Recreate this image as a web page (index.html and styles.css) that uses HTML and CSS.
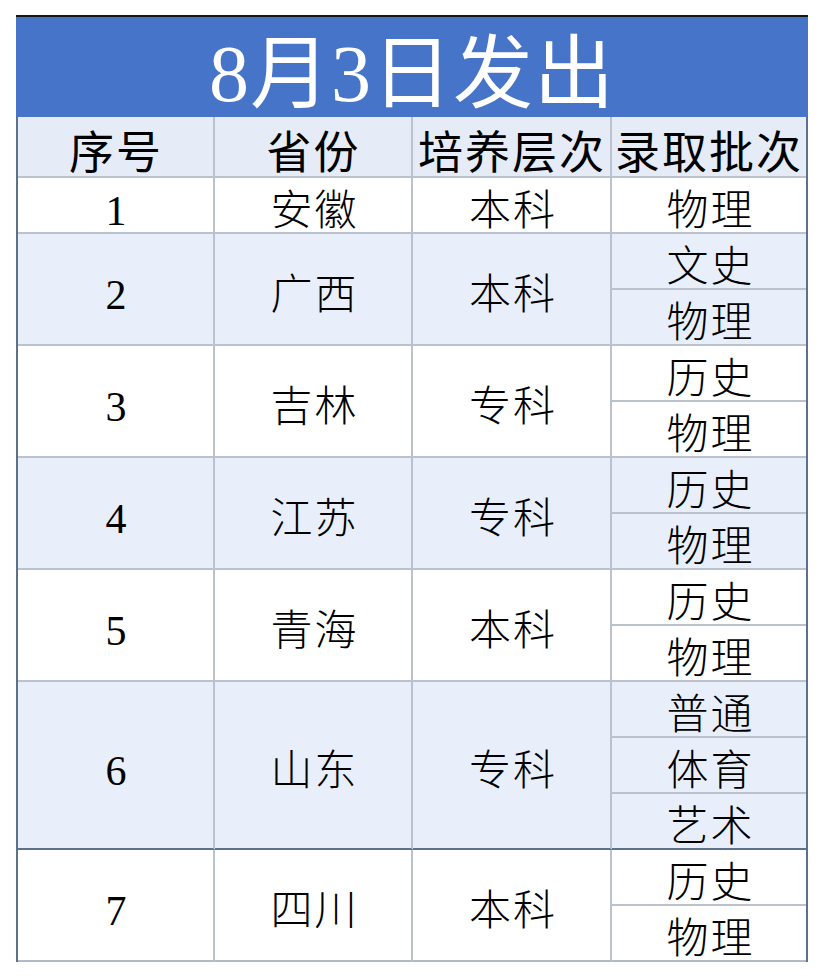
FILE: index.html
```html
<!DOCTYPE html>
<html lang="zh-CN">
<head>
<meta charset="utf-8">
<title>8月3日发出</title>
<link rel="stylesheet" href="styles.css">
</head>
<body>
<div class="sheet">
  <div class="title">8月3日发出</div>
  <div class="grid">
    <div class="cell head">序号</div>
    <div class="cell head">省份</div>
    <div class="cell head">培养层次</div>
    <div class="cell head last-col">录取批次</div>

    <div class="cell">1</div>
    <div class="cell">安徽</div>
    <div class="cell">本科</div>
    <div class="cell last-col">物理</div>

    <div class="cell alt span2">2</div>
    <div class="cell alt span2">广西</div>
    <div class="cell alt span2">本科</div>
    <div class="cell alt last-col">文史</div>
    <div class="cell alt last-col">物理</div>

    <div class="cell span2">3</div>
    <div class="cell span2">吉林</div>
    <div class="cell span2">专科</div>
    <div class="cell last-col">历史</div>
    <div class="cell last-col">物理</div>

    <div class="cell alt span2">4</div>
    <div class="cell alt span2">江苏</div>
    <div class="cell alt span2">专科</div>
    <div class="cell alt last-col">历史</div>
    <div class="cell alt last-col">物理</div>

    <div class="cell span2">5</div>
    <div class="cell span2">青海</div>
    <div class="cell span2">本科</div>
    <div class="cell last-col">历史</div>
    <div class="cell last-col">物理</div>

    <div class="cell alt span3 dark">6</div>
    <div class="cell alt span3 dark">山东</div>
    <div class="cell alt span3 dark">专科</div>
    <div class="cell alt last-col">普通</div>
    <div class="cell alt last-col">体育</div>
    <div class="cell alt last-col dark">艺术</div>

    <div class="cell span2 end">7</div>
    <div class="cell span2 end">四川</div>
    <div class="cell span2 end">本科</div>
    <div class="cell last-col">历史</div>
    <div class="cell last-col end">物理</div>
  </div>
</div>
</body>
</html>
```

FILE: styles.css
```css
html, body {
  margin: 0;
  padding: 0;
  background: #ffffff;
}

body {
  font-family: "Liberation Serif", "Noto Sans CJK SC", serif;
  color: #000000;
}

.sheet {
  margin: 15px 0 0 16px;
  width: 792px;
  border-top: 2px solid #151515;
}

.title {
  box-sizing: border-box;
  height: 100px;
  padding-top: 14px;
  background: #4674c8;
  color: #ffffff;
  font-size: 80px;
  line-height: 1;
  letter-spacing: 1px;
  display: flex;
  align-items: center;
  justify-content: center;
}

.grid {
  box-sizing: border-box;
  width: 792px;
  display: grid;
  grid-template-columns: 197px 198px 199px 1fr;
  grid-template-rows: 61px repeat(14, 56px);
  border-left: 2px solid #5d718c;
  border-right: 2px solid #5d718c;
}

.cell {
  box-sizing: border-box;
  display: flex;
  align-items: center;
  justify-content: center;
  padding-top: 11px;
  padding-left: 3px;
  border-right: 2px solid #bac2ce;
  border-bottom: 2px solid #bac2ce;
  font-size: 42px;
  line-height: 1;
  letter-spacing: 2px;
  font-weight: 300;
  white-space: nowrap;
  background: #ffffff;
}

.head {
  background: #e5ecf8;
  font-size: 45px;
  letter-spacing: 2px;
  font-weight: 400;
  padding-top: 15px;
  padding-left: 1px;
}

.alt {
  background: #e9effa;
}

.last-col {
  border-right: none;
}

.head.last-col {
  padding-left: 0;
}

.span2 {
  grid-row: span 2;
}

.span3 {
  grid-row: span 3;
}

.dark {
  border-bottom-color: #5d718c;
}

.end {
  border-bottom-color: #b2bac6;
}
```
